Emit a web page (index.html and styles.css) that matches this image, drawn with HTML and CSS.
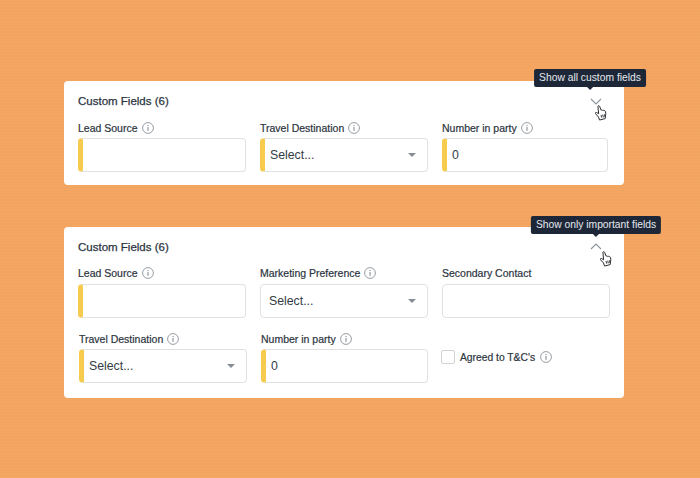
FILE: index.html
```html
<!DOCTYPE html>
<html lang="en">
<head>
    <meta charset="UTF-8">
    <title>Custom Fields</title>
    <link rel="stylesheet" href="styles.css">
</head>
<body>

<svg class="defs" width="0" height="0">
    <symbol id="info" viewBox="0 0 12 12">
        <circle cx="6" cy="6" r="5.4" fill="none" stroke="#8b9299" stroke-width="0.9"/>
        <rect x="5.5" y="5" width="1" height="3.8" fill="#7b838b"/>
        <rect x="5.5" y="3" width="1" height="1.1" fill="#7b838b"/>
    </symbol>
    <symbol id="hand" viewBox="0 0 16 20">
        <path d="M3.600 2.200c-.5-1.300 1.400-1.900 2-.6l2 5c.5-.7 1.500-.6 1.900.2.500-.5 1.500-.3 1.800.5.600-.4 1.500 0 1.700.8.500 2 .5 4 0 5.500l-.4 3.400-7 1.800-1.400-3.800L.6 11c-.9-.9.2-2.300 1.300-1.600l2.500 1.600z" fill="#fff" stroke="#23262a" stroke-width="1.200" stroke-linejoin="round"/>
        <path d="M7.400 12.400l.8 3.400M9.500 12l.8 3.400M11.600 11.600l.7 3.400" fill="none" stroke="#23262a" stroke-width="1.100"/>
    </symbol>
</svg>

<div class="card card-short">
    <div class="card-head">
        <h2>Custom Fields (6)</h2>
        <div class="toggle">
            <div class="tooltip tooltip-short">Show all custom fields</div>
            <svg class="chevron" width="12" height="7" viewBox="0 0 12 7"><path d="M1 1l5 5 5-5" fill="none" stroke="#8d949b" stroke-width="1.100"/></svg>
            <svg class="hand" width="13" height="16"><use href="#hand"/></svg>
        </div>
    </div>
    <div class="row">
        <div class="field">
            <label>Lead Source <svg class="info"><use href="#info"/></svg></label>
            <div class="box required"></div>
        </div>
        <div class="field">
            <label>Travel Destination <svg class="info"><use href="#info"/></svg></label>
            <div class="box required">Select...<span class="caret"></span></div>
        </div>
        <div class="field field-narrow">
            <label>Number in party <svg class="info"><use href="#info"/></svg></label>
            <div class="box required">0</div>
        </div>
    </div>
</div>

<div class="card card-full">
    <div class="card-head">
        <h2>Custom Fields (6)</h2>
        <div class="toggle">
            <div class="tooltip tooltip-full">Show only important fields</div>
            <svg class="chevron" width="12" height="7" viewBox="0 0 12 7"><path d="M1 6l5-5 5 5" fill="none" stroke="#8d949b" stroke-width="1.100"/></svg>
            <svg class="hand hand-full" width="13" height="16"><use href="#hand"/></svg>
        </div>
    </div>
    <div class="row row-first">
        <div class="field">
            <label>Lead Source <svg class="info"><use href="#info"/></svg></label>
            <div class="box required"></div>
        </div>
        <div class="field">
            <label>Marketing Preference <svg class="info"><use href="#info"/></svg></label>
            <div class="box">Select...<span class="caret"></span></div>
        </div>
        <div class="field">
            <label>Secondary Contact</label>
            <div class="box"></div>
        </div>
    </div>
    <div class="row row-second">
        <div class="field">
            <label>Travel Destination <svg class="info"><use href="#info"/></svg></label>
            <div class="box required">Select...<span class="caret"></span></div>
        </div>
        <div class="field field-mid">
            <label>Number in party <svg class="info"><use href="#info"/></svg></label>
            <div class="box required">0</div>
        </div>
        <div class="check">
            <span class="checkbox"></span>
            <span class="check-label">Agreed to T&amp;C's</span>
            <svg class="info"><use href="#info"/></svg>
        </div>
    </div>
</div>

</body>
</html>
```

FILE: styles.css
```css
body {
    margin: 0;
    padding: 81px 0 0 64px;
    height: 478px;
    box-sizing: border-box;
    overflow: hidden;
    background-color: #f4a561;
    background-image: repeating-linear-gradient(0deg, rgba(255, 255, 255, 0.012) 0 1px, rgba(0, 0, 0, 0.006) 1px 3px);
    font-family: "Liberation Sans", Arial, sans-serif;
    color: #2b3440;
}
.defs { position: absolute; }

.card {
    width: 560px;
    box-sizing: border-box;
    background: #fff;
    border-radius: 4px;
    padding: 0 14px;
}
.card-short { height: 104px; margin-bottom: 42px; }
.card-full { height: 171px; }

.card-head {
    display: flex;
    justify-content: space-between;
    align-items: center;
    height: 40px;
}
.card-full .card-head { height: 39px; }
h2 {
    margin: 0;
    font-size: 11.500px;
    font-weight: normal;
    -webkit-text-stroke: 0.25px #2b3440;
}

.toggle {
    position: relative;
    width: 12px;
    height: 7px;
    margin-right: 8px;
}
.chevron { display: block; }
.tooltip {
    position: absolute;
    transform: translateX(-50%);
    padding: 0 5px;
    height: 18px;
    line-height: 18px;
    background: #1d2738;
    color: #e6e9ee;
    font-size: 10.300px;
    white-space: nowrap;
    border-radius: 2px;
}
.tooltip-short { bottom: 18px; left: 0; }
.tooltip-full { bottom: 16px; left: 6px; }
.tooltip::after {
    content: "";
    position: absolute;
    left: 50%;
    bottom: -3px;
    margin-left: -3px;
    border: 3px solid transparent;
    border-bottom: 0;
    border-top-color: #1d2738;
}
.hand { position: absolute; top: 7px; left: 5px; }
.hand-full { top: 8px; left: 10px; }

.row {
    display: flex;
    gap: 14px;
}
.row-second { margin: 14px 0 0 1px; }
.field { width: 168px; }
.field-narrow { width: 166px; }
.field-mid { width: 167px; }
label {
    display: flex;
    align-items: flex-start;
    height: 17px;
    line-height: 14px;
    font-size: 10.500px;
    white-space: nowrap;
    -webkit-text-stroke: 0.2px #2b3440;
}
.row-first label { height: 18px; }
.info { width: 12px; height: 12px; margin: 1px 0 0 4px; flex: none; }

.box {
    position: relative;
    height: 34px;
    box-sizing: border-box;
    border: 1px solid #dfe2e5;
    border-radius: 4px;
    padding-left: 8px;
    line-height: 32px;
    font-size: 12.300px;
    color: #353c45;
}
.required {
    border-left: 5px solid #f7cb4d;
    padding-left: 5px;
}
.caret {
    position: absolute;
    right: 11px;
    top: 14px;
    border: 4px solid transparent;
    border-bottom: 0;
    border-top-color: #868d94;
}

.check {
    display: flex;
    align-items: center;
    height: 14px;
    margin: 18px 0 0 -1px;
    font-size: 10.300px;
    -webkit-text-stroke: 0.2px #2b3440;
}
.check .info { margin: 0 0 0 5px; }
.checkbox {
    width: 14px;
    height: 14px;
    box-sizing: border-box;
    border: 1px solid #cfd3d7;
    border-radius: 2px;
    margin-right: 5px;
}
```
